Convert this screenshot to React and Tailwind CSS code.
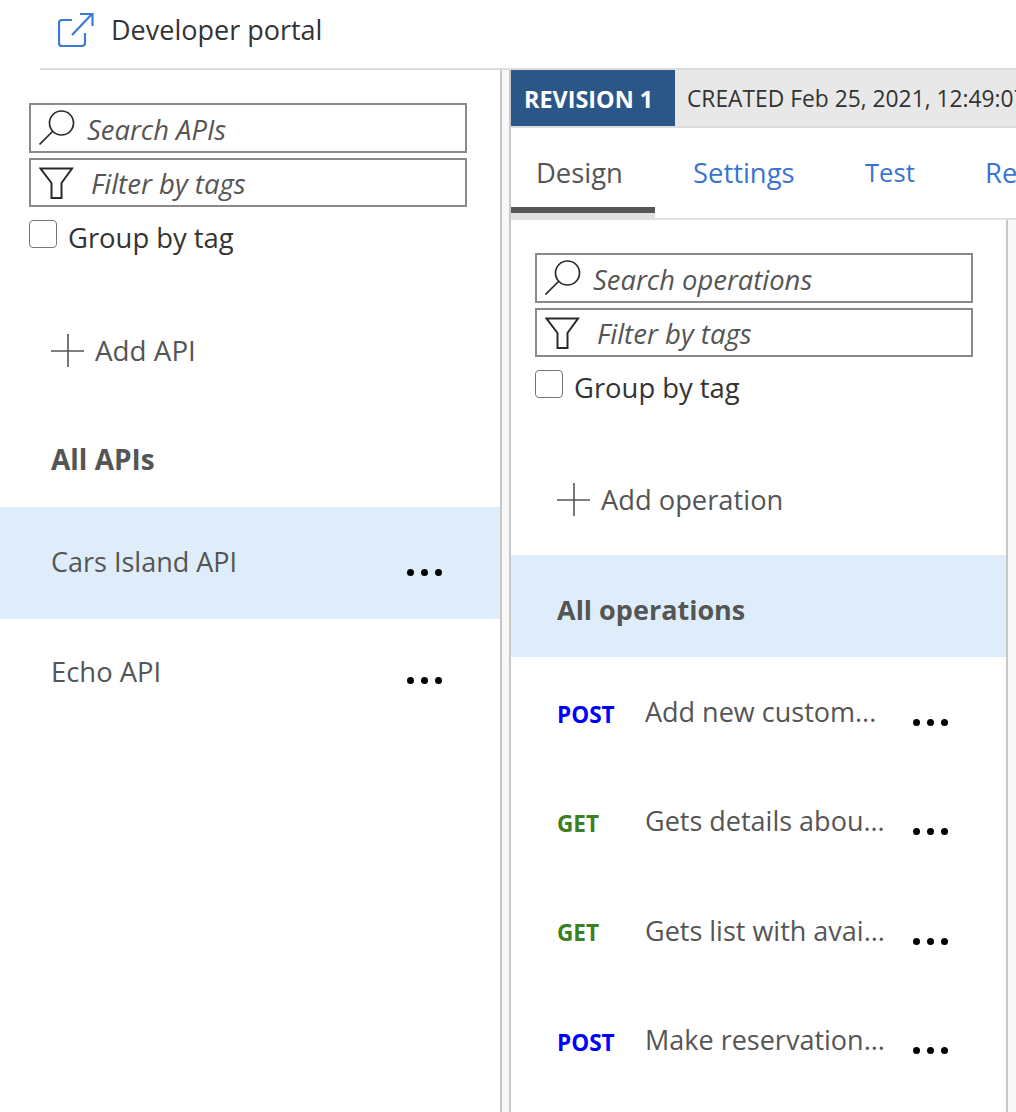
const font = "font-['Open_Sans',sans-serif]";

const SearchIcon = () => (
  <svg width="36" height="36" viewBox="0 0 36 36" fill="none" stroke="#2a2a2a" strokeWidth="1.7" className="shrink-0">
    <circle cx="22.5" cy="13" r="12" />
    <path d="M13.5 21.5 L0.5 34.5" />
  </svg>
);

const FilterIcon = () => (
  <svg width="36" height="34" viewBox="0 0 36 34" fill="none" stroke="#2a2a2a" strokeWidth="2" className="shrink-0">
    <path d="M1.5 2.5 H33 L22.5 17 V32 H12.5 V17 Z" />
  </svg>
);

const PlusIcon = () => (
  <svg width="34" height="34" viewBox="0 0 34 34" fill="none" stroke="#555" strokeWidth="1.6" className="shrink-0">
    <path d="M0 17 H33 M17 0 V33" />
  </svg>
);

const Dots = () => (
  <div className="flex gap-[7px]">
    <span className="w-[7px] h-[7px] rounded-full bg-black" />
    <span className="w-[7px] h-[7px] rounded-full bg-black" />
    <span className="w-[7px] h-[7px] rounded-full bg-black" />
  </div>
);

const Filters = ({ placeholder }) => (
  <div className="w-[438px] flex flex-col gap-[5px]">
    <div className="h-[50px] border-2 border-[#8a8a8a] flex items-center pl-2 gap-[12px]">
      <SearchIcon />
      <span className="text-[27.4px] leading-[40px] pt-[3px] italic text-[#555]">{placeholder}</span>
    </div>
    <div className="h-[49px] border-2 border-[#8a8a8a] flex items-center pl-2 gap-4">
      <FilterIcon />
      <span className="text-[27.6px] leading-[40px] pt-[1px] italic text-[#555]">Filter by tags</span>
    </div>
    <div className="flex items-start gap-[11px] mt-2">
      <span className="w-[28px] h-[28px] border border-[#777] rounded-[4px] bg-white" />
      <span className="text-[27.4px] leading-[36px] text-[#333]">Group by tag</span>
    </div>
  </div>
);

const operations = [
  { method: 'POST', color: 'text-[#0000ff]', title: 'Add new custom...' },
  { method: 'GET', color: 'text-[#3b8121]', title: 'Gets details abou...' },
  { method: 'GET', color: 'text-[#3b8121]', title: 'Gets list with avai...' },
  { method: 'POST', color: 'text-[#0000ff]', title: 'Make reservation...' },
];

export default function App() {
  return (
    <div className={`${font} w-[1016px] h-[1112px] overflow-hidden bg-white flex flex-col`}>
      {/* Top bar */}
      <div className="h-[68px] shrink-0 flex items-center pl-[58px] pb-[8px] gap-[17px]">
        <svg width="36" height="36" viewBox="0 0 36 36" fill="none" stroke="#3a7cd2" strokeWidth="2.2">
          <path d="M14 8 H4 Q1 8 1 11 V31 Q1 34 4 34 H24 Q27 34 27 31 V21" />
          <path d="M14 23 L34 2 M22 2 H34.5 V14" />
        </svg>
        <span className="text-[27px] text-[#333]">Developer portal</span>
      </div>

      <div className="ml-[40px] h-[2px] shrink-0 bg-[#dcdcdc]" />

      <div className="flex flex-1 min-h-0">
        {/* API list */}
        <div className="w-[500px] shrink-0 flex flex-col pt-[33px]">
          <div className="pl-[29px]">
            <Filters placeholder="Search APIs" />
          </div>
          <div className="flex items-center gap-[10px] pl-[51px] mt-[78px] h-[34px]">
            <PlusIcon />
            <span className="text-[27.8px] text-[#555]">Add API</span>
          </div>
          <div className="pl-[51px] pb-[2px] mt-[74px] h-[36px] flex items-center text-[28px] font-bold text-[#555]">All APIs</div>
          <div className="mt-[29px] h-[112px] bg-[#dfedfb] flex pl-[51px] pr-[58px] justify-between">
            <span className="text-[27px] text-[#555] mt-[36px] leading-[38px]">Cars Island API</span>
            <div className="mt-[62px]"><Dots /></div>
          </div>
          <div className="h-[112px] flex pl-[51px] pr-[58px] justify-between">
            <span className="text-[27.4px] text-[#555] mt-[34px] leading-[38px]">Echo API</span>
            <div className="mt-[58px]"><Dots /></div>
          </div>
        </div>

        <div className="w-[2px] shrink-0 bg-[#c8c8c8]" />
        <div className="w-[7px] shrink-0 bg-[#f8f8f8]" />
        <div className="w-[2px] shrink-0 bg-[#c8c8c8]" />

        {/* Revision pane */}
        <div className="flex-1 min-w-0 flex flex-col overflow-hidden">
          <div className="h-[58px] shrink-0 flex bg-[#e8e8e8] border-b-2 border-[#dddddd] whitespace-nowrap">
            <div className="w-[164px] shrink-0 bg-[#2b5788] text-white font-bold text-[23.4px] flex items-center pl-[13px] pt-[3px]">REVISION 1</div>
            <div className="pl-[12px] pt-[3px] flex items-center text-[22.8px] text-[#333]">CREATED Feb 25, 2021, 12:49:07 PM</div>
          </div>

          <div className="h-[92px] shrink-0 flex whitespace-nowrap text-[27.4px] leading-[40px] text-[#3a74d0] border-b-2 border-[#e0e0e0]">
            <div className="w-[144px] shrink-0 bg-[#e0e0e0] pb-[5px]">
              <div className="h-full bg-white pl-[25px] pt-[25px] text-[#555] border-b-[6px] border-[#555]">Design</div>
            </div>
            <div className="w-[172px] shrink-0 pl-[38px] pt-[25px]">Settings</div>
            <div className="w-[158px] shrink-0 pl-[38px] pt-[25px] text-[25.6px]">Test</div>
            <div className="pt-[25px]">Revisions</div>
          </div>

          <div className="flex flex-1 min-h-0">
            <div className="w-[495px] shrink-0 flex flex-col pt-[33px]">
              <div className="pl-[24px]">
                <Filters placeholder="Search operations" />
              </div>
              <div className="flex items-center gap-[10px] pl-[46px] mt-[77px] h-[34px]">
                <PlusIcon />
                <span className="text-[27.3px] text-[#555]">Add operation</span>
              </div>
              <div className="mt-[38px] h-[102px] shrink-0 bg-[#dfedfb] flex items-center pl-[46px] pt-[8px] text-[27px] font-bold text-[#555]">All operations</div>
              {operations.map((op, i) => (
                <div key={i} className="h-[109.4px] shrink-0 flex pl-[46px]">
                  <span className={`w-[88px] shrink-0 mt-[43.6px] text-[22.6px] font-bold leading-[28px] ${op.color}`}>{op.method}</span>
                  <span className="w-[268px] shrink-0 mt-[36px] text-[27px] text-[#555] leading-[38px] whitespace-nowrap">{op.title}</span>
                  <div className="mt-[62px]"><Dots /></div>
                </div>
              ))}
            </div>
            <div className="w-[2px] shrink-0 bg-[#c8c8c8]" />
            <div className="flex-1 bg-[#f8f8f8]" />
          </div>
        </div>
      </div>
    </div>
  );
}
